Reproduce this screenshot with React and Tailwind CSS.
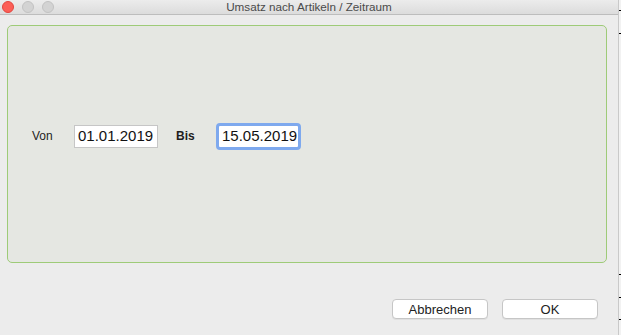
export default function App() {
  return (
    <div
      className="w-[621px] h-[335px] flex bg-[#ececec] overflow-hidden"
      style={{ fontFamily: '"Liberation Sans", Arial, sans-serif' }}
    >
      {/* window */}
      <div className="w-[618px] flex flex-col">
        {/* title bar */}
        <div className="h-[15px] flex items-center border-b border-[#bdbdbd] bg-gradient-to-b from-[#ececec] to-[#dcdcdc]">
          <div className="flex items-center gap-2 pl-[2px]">
            <span className="w-3 h-3 rounded-full bg-[#fc5f57] border border-[#e2463f]" />
            <span className="w-3 h-3 rounded-full bg-[#d3d3d3] border border-[#c2c2c2]" />
            <span className="w-3 h-3 rounded-full bg-[#d3d3d3] border border-[#c2c2c2]" />
          </div>
          <div className="flex-1 text-center text-[11.7px] leading-none text-[#4a4a4a] pr-[54px]">
            Umsatz nach Artikeln / Zeitraum
          </div>
        </div>

        {/* panel */}
        <div className="px-[7px] pt-[10px]">
          <div className="w-[600px] h-[238px] rounded-[5px] border border-[#9ecb78] bg-[#e5e7e2] pt-[96px] pl-[24px]">
            <div className="h-[28px] flex items-center">
              <div className="w-[42px] text-[12px] text-[#1e1e1e]">Von</div>
              <div className="w-[84px] h-[23px] border border-[#c6c6c6] bg-white pl-[3px] flex items-center text-[15px] text-[#111]">
                01.01.2019
              </div>
              <div className="w-[58px] pl-[18px] text-[12px] font-bold text-[#1e1e1e]">Bis</div>
              <div className="w-[85px] h-[27px] rounded-[4px] border-[3px] border-[#7ea9ee] bg-white pl-[3px] flex items-center text-[15px] text-[#111]">
                15.05.2019
              </div>
            </div>
          </div>
        </div>

        {/* buttons */}
        <div className="flex justify-end gap-[14px] pt-[36px] pr-[20px]">
          <button className="w-[96px] h-[20px] rounded-[4px] border border-[#c6c6c6] bg-white text-[13px] leading-none text-[#222] shadow-[0_1px_0_rgba(0,0,0,0.05)]">
            Abbrechen
          </button>
          <button className="w-[96px] h-[20px] rounded-[4px] border border-[#c6c6c6] bg-white text-[13px] leading-none text-[#222] shadow-[0_1px_0_rgba(0,0,0,0.05)]">
            OK
          </button>
        </div>
      </div>

      {/* right edge strip */}
      <div className="relative w-[3px] h-full border-l border-[#c9c9c9] bg-[#f2f2f2]">
        <span className="absolute right-0 top-[10px] w-[2px] h-[1px] bg-black" />
        <span className="absolute right-0 top-[33px] w-[2px] h-[1px] bg-black" />
        <span className="absolute right-0 top-[274px] w-[2px] h-[1px] bg-black" />
        <span className="absolute right-0 top-[297px] w-[2px] h-[1px] bg-black" />
        <span className="absolute right-0 top-[319px] w-[2px] h-[1px] bg-black" />
      </div>
    </div>
  );
}
